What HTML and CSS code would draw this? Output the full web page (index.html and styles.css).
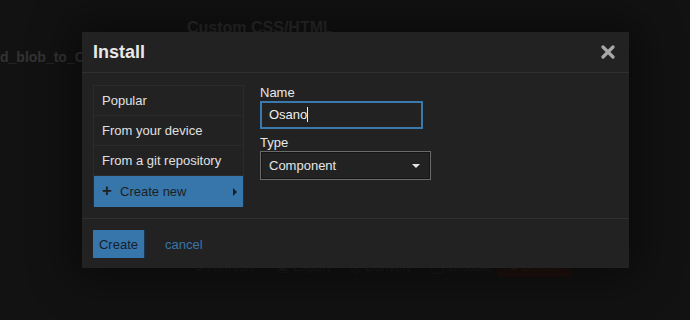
FILE: index.html
```html
<!DOCTYPE html>
<html>
	<head>
		<meta charset="UTF-8">
		<title>Install</title>
		<link rel="stylesheet" href="styles.css">
	</head>
	<body>
		<div class="page">
			<div class="pageTitle">Custom CSS/HTML</div>
			<div class="blobName">d_blob_to_CS</div>
			<div class="actions">
				<span class="act a1">&#8635; Refresh</span>
				<span class="act a2">&#9635; Export</span>
				<span class="act a3">&#9678; Convert</span>
				<span class="act a4">&#9711; Disable</span>
				<span class="act danger">&#9632; Delete</span>
			</div>
		</div>

		<div class="modal">
			<div class="modalHeader">
				<h3>Install</h3>
				<svg class="close" width="14" height="14" viewBox="0 0 14 14">
					<path d="M2 2L12 12M12 2L2 12" stroke="#a8a8a8" stroke-width="3.2" stroke-linecap="round"/>
				</svg>
			</div>
			<div class="modalBody">
				<ul class="sources">
					<li>Popular</li>
					<li>From your device</li>
					<li>From a git repository</li>
					<li class="active"><span class="plus">+</span>Create new<span class="caret"></span></li>
				</ul>
				<div class="form">
					<label>Name</label>
					<div class="input">Osano<span class="cursor"></span></div>
					<label>Type</label>
					<div class="select">Component<span class="down"></span></div>
				</div>
			</div>
			<div class="modalFooter">
				<button class="btnCreate">Create</button>
				<a href="#" class="cancel">cancel</a>
			</div>
		</div>
	</body>
</html>
```

FILE: styles.css
```css
body, div, ul, h3{
	margin: 0;
	padding: 0;
}
li{
	list-style: none;
}
a{
	text-decoration: none;
}
html, body{
	width: 100%;
	height: 100%;
}
body{
	background: #121212;
	font-family: "Liberation Sans", Arial, sans-serif;
	font-size: 13px;
	overflow: hidden;
}
.page{
	color: #2a2a2a;
	font-weight: bold;
}
.pageTitle{
	font-size: 16px;
	padding: 19px 0 0 187px;
}
.blobName{
	font-size: 14px;
	padding-top: 12px;
	color: #333;
}
.actions{
	display: flex;
	padding: 194px 0 0 193px;
	color: #1e1e1e;
	font-weight: normal;
	line-height: 16px;
}
.a1{
	width: 84px;
}
.a2{
	width: 73px;
}
.a3{
	width: 80px;
}
.a4{
	width: 68px;
}
.act.danger{
	background: #1e110d;
	color: #2a1812;
	padding: 0 12px;
	height: 18px;
}
.modal{
	position: absolute;
	left: 82px;
	top: 32px;
	width: 547px;
	height: 236px;
	background: #222;
	box-shadow: 0 0 40px 10px rgba(0,0,0,.45);
	color: #ddd;
}
.modalHeader{
	height: 40px;
	display: flex;
	align-items: center;
	justify-content: space-between;
	padding: 0 14px 0 11px;
	border-bottom: solid 1px #2f2f2f;
}
.modalHeader h3{
	font-size: 18px;
	color: #e8e8e8;
}
.close{
	display: block;
}
.modalBody{
	display: flex;
	gap: 16px;
	padding: 12px 11px 11px;
	border-bottom: solid 1px #2f2f2f;
}
.sources{
	width: 151px;
	border: solid 1px #2b2b2b;
	border-bottom: none;
	box-sizing: border-box;
}
.sources li{
	height: 30px;
	box-sizing: border-box;
	line-height: 29px;
	padding-left: 8px;
	border-bottom: solid 1px #2b2b2b;
	color: #e0e0e0;
	display: flex;
	align-items: center;
}
.sources li.active{
	height: 31px;
	border-bottom: none;
	background: #3776aa;
	color: #1c1f24;
}
.plus{
	font-size: 17px;
	font-weight: bold;
	width: 18px;
	margin-top: -2px;
}
.caret{
	margin-left: auto;
	margin-right: 6px;
	border-left: 4px solid #1c1f24;
	border-top: 4px solid transparent;
	border-bottom: 4px solid transparent;
}
.form{
	display: flex;
	flex-direction: column;
	align-items: flex-start;
}
.form label{
	color: #e8e8e8;
	line-height: 15px;
	margin-bottom: 1px;
}
.input{
	width: 163px;
	height: 28px;
	box-sizing: border-box;
	border: solid 2px #3a79ae;
	padding-left: 7px;
	line-height: 24px;
	color: #eee;
	margin-bottom: 6px;
}
.cursor{
	display: inline-block;
	width: 1px;
	height: 15px;
	background: #eee;
	vertical-align: -3px;
}
.select{
	width: 171px;
	height: 29px;
	box-sizing: border-box;
	border: solid 1px #6a6a6a;
	box-shadow: inset 0 0 0 1px #151515;
	padding: 0 8px 0 8px;
	line-height: 27px;
	color: #e6e6e6;
	display: flex;
	align-items: center;
	justify-content: space-between;
}
.down{
	border-top: 4px solid #e6e6e6;
	border-left: 4px solid transparent;
	border-right: 4px solid transparent;
	margin-right: 2px;
}
.modalFooter{
	display: flex;
	align-items: center;
	gap: 20px;
	padding: 11px 11px;
}
.btnCreate{
	width: 52px;
	height: 28px;
	border: none;
	border-right: solid 1px #1a3550;
	background: #3776aa;
	color: #17202a;
	font-family: "Liberation Sans", Arial, sans-serif;
	font-size: 13px;
	padding: 0;
}
.cancel{
	color: #3776aa;
}
```
